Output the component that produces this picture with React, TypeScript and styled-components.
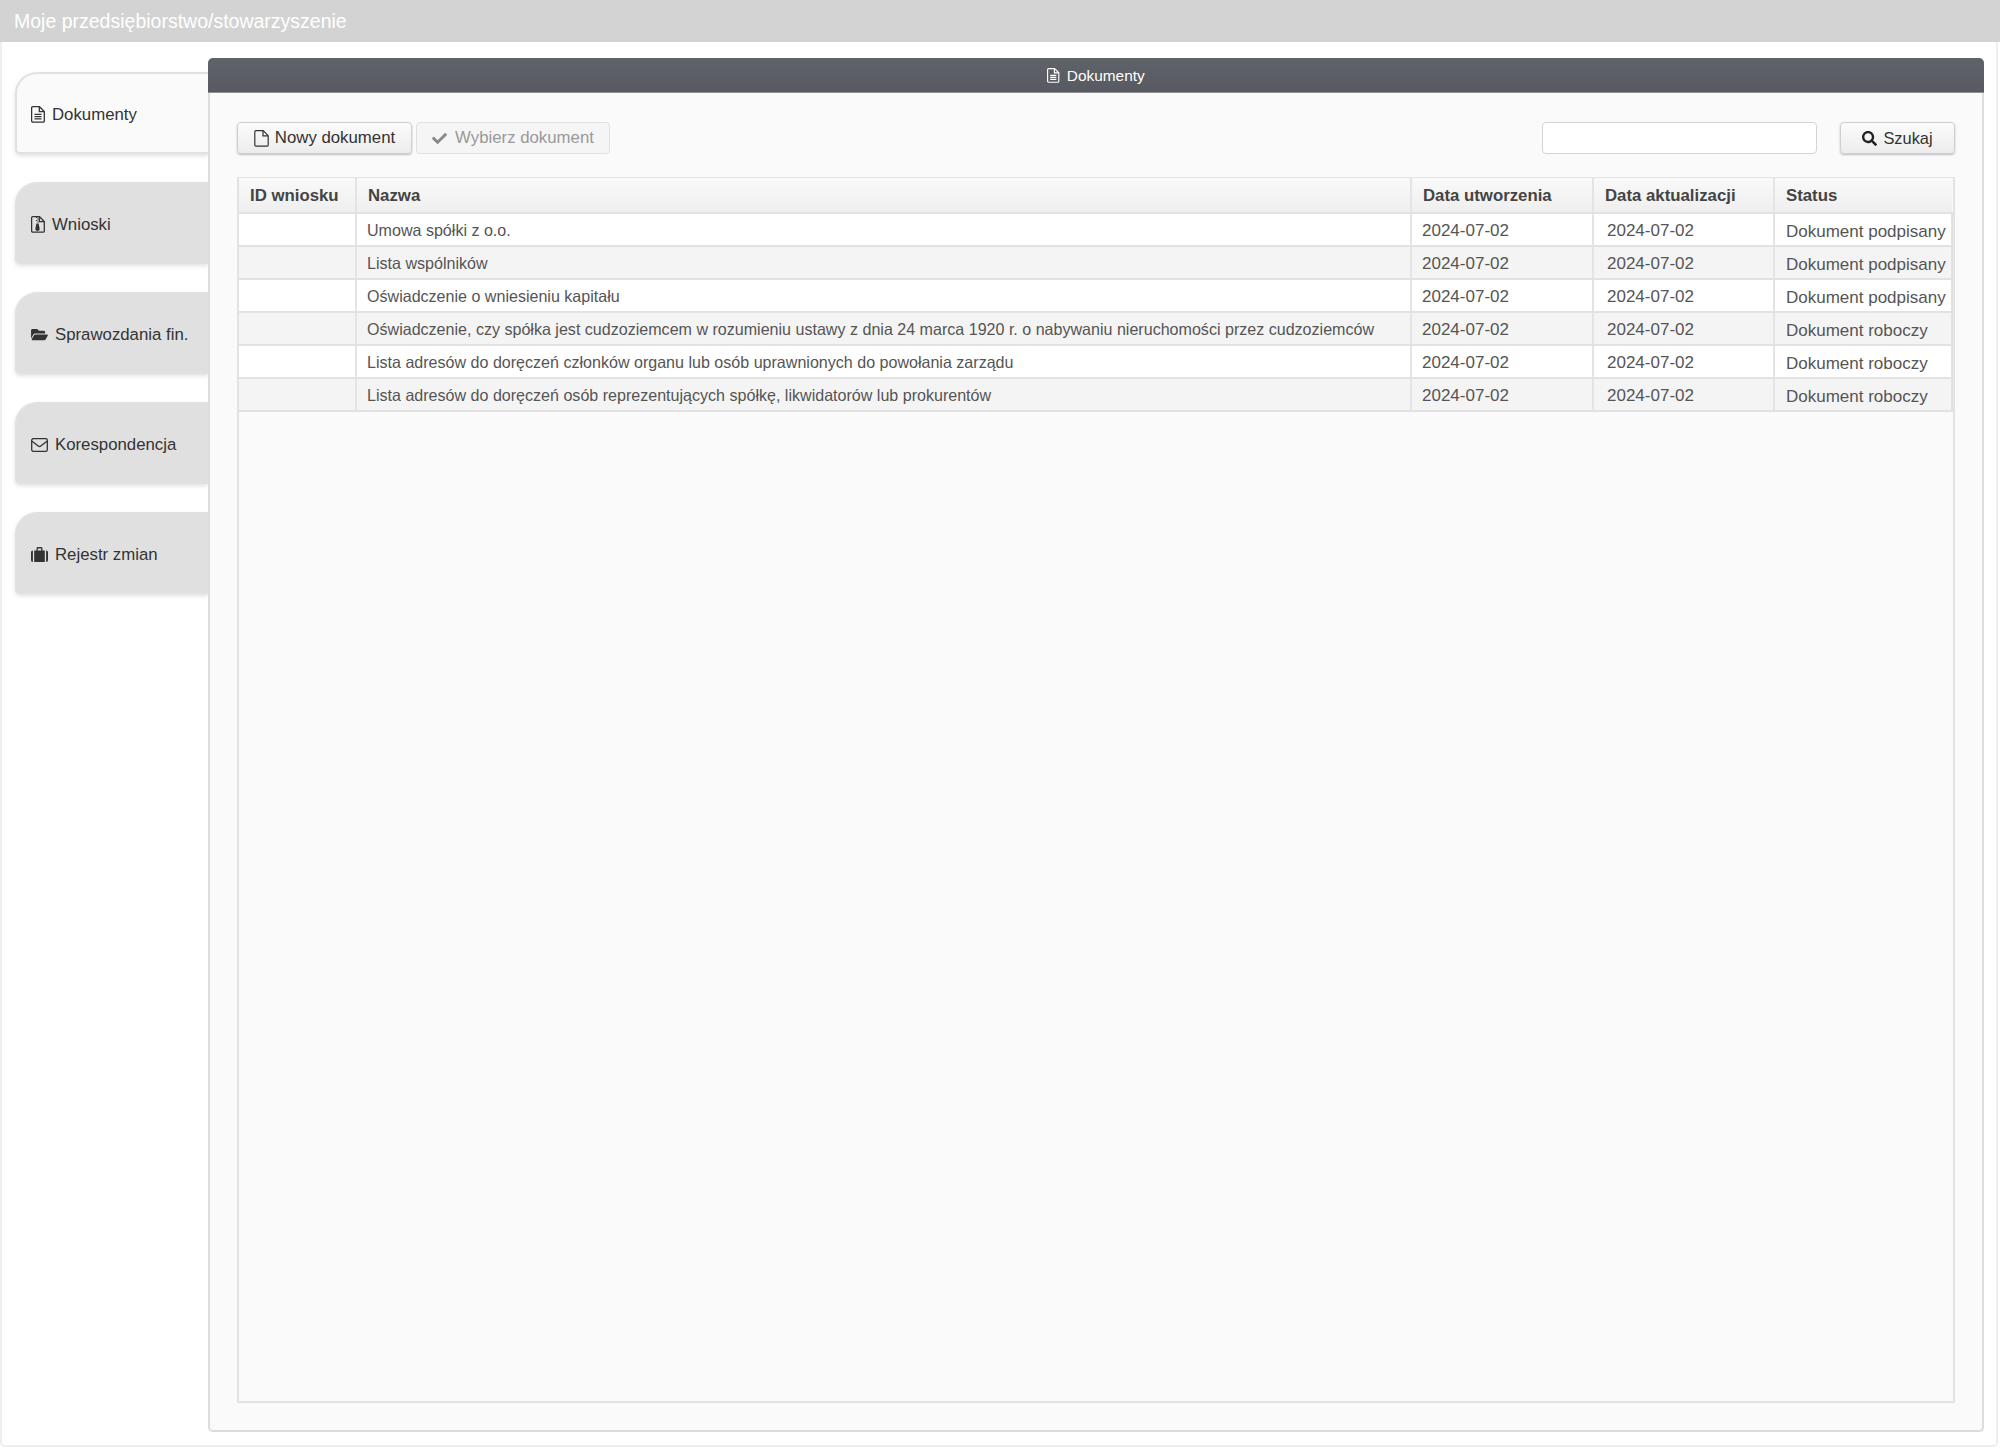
import React from 'react';
import styled, { createGlobalStyle } from 'styled-components';
import { FaFolderOpen, FaCheck, FaSearch } from 'react-icons/fa';

const Global = createGlobalStyle`
  html, body { margin: 0; padding: 0; background: #fff; }
  body { font-family: "Liberation Sans", Arial, sans-serif; }
  * { box-sizing: border-box; }
`;

const Page = styled.div`
  width: 2000px;
  height: 1450px;
  display: flex;
  flex-direction: column;
  overflow: hidden;
`;
const TopBar = styled.header`
  flex: none;
  height: 42px;
  background: #d3d3d3;
  color: #fff;
  font-size: 19.5px;
  line-height: 42px;
  padding-left: 14px;
`;
const Frame = styled.div`
  flex: none;
  width: 1998px;
  height: 1405px;
  border: 2px solid #eeeeee;
  border-top: 0;
  border-radius: 0 0 5px 5px;
  display: flex;
  padding: 16px 12px 13px 13px;
`;
const Tabs = styled.nav`
  flex: none;
  width: 193px;
  padding-top: 14px;
  display: flex;
  flex-direction: column;
  gap: 28px;
`;
const Tab = styled.a<{ $active?: boolean }>`
  height: 82px;
  display: flex;
  align-items: center;
  gap: 7px;
  padding: 3px 0 0 14px;
  border: 2px solid #e1e1e1;
  border-right: 0;
  border-radius: 22px 0 0 5px;
  background: ${p => (p.$active ? '#fafafa' : '#e0e0e0')};
  box-shadow: 0 2px 4px rgba(0, 0, 0, 0.12);
  color: #333;
  font-size: 16.8px;
  svg { flex: none; color: #333; }
`;
const FolderIcon = styled(FaFolderOpen)`
  width: 17px;
  height: 15px;
`;
const Panel = styled.section`
  flex: 1;
  display: flex;
  flex-direction: column;
  border: 2px solid #dcdcdc;
  border-top: 0;
  border-radius: 5px;
  background: #fafafa;
`;
const PanelHead = styled.div`
  flex: none;
  height: 35px;
  margin: 0 -2px;
  padding-top: 1px;
  border-radius: 5px 5px 0 0;
  background: linear-gradient(#5f6269, #575a60);
  border-bottom: 1px solid #8d8f93;
  color: #fff;
  font-size: 15.4px;
  display: flex;
  align-items: center;
  justify-content: center;
  gap: 7px;
`;
const PanelBody = styled.div`
  flex: 1;
  display: flex;
  flex-direction: column;
  padding: 29px 27px 27px 27px;
  min-height: 0;
`;
const Toolbar = styled.div`
  flex: none;
  height: 32px;
  display: flex;
  align-items: stretch;
  gap: 4px;
  margin-bottom: 23px;
`;
const Button = styled.button<{ $disabled?: boolean }>`
  height: 32px;
  display: inline-flex;
  align-items: center;
  justify-content: center;
  gap: 6px;
  padding: 0;
  border: 1px solid ${p => (p.$disabled ? '#e0e0e0' : '#cfcfcf')};
  border-radius: 4px;
  background: ${p => (p.$disabled ? '#f5f5f5' : 'linear-gradient(#fbfbfb, #ececec)')};
  box-shadow: ${p => (p.$disabled ? 'none' : '0 1px 2px rgba(0, 0, 0, 0.25)')};
  color: ${p => (p.$disabled ? '#999' : '#333')};
  font-family: inherit;
  font-size: 16.8px;
`;
const NewButton = styled(Button)`
  width: 175px;
`;
const PickButton = styled(Button)`
  width: 194px;
  gap: 8px;
  svg { font-size: 15px; color: #888; }
`;
const SearchButton = styled(Button)`
  width: 115px;
  font-size: 16.4px;
  svg { font-size: 15px; color: #222; }
`;
const SearchInput = styled.input`
  width: 275px;
  height: 32px;
  margin-left: auto;
  margin-right: 19px;
  border: 1px solid #d4d4d4;
  border-radius: 4px;
  background: #fff;
`;
const GridFrame = styled.div`
  flex: 1;
  min-height: 0;
  border: 2px solid #e2e2e2;
  border-top-width: 1px;
`;
const Table = styled.table`
  width: 100%;
  table-layout: fixed;
  border-collapse: collapse;
`;
const HeadCell = styled.th`
  height: 35px;
  padding: 2px 0 0 11px;
  background: linear-gradient(#f9f9f9, #efefef);
  border-right: 2px solid #e4e4e4;
  border-bottom: 2px solid #e2e2e2;
  color: #444;
  font-size: 16.8px;
  font-weight: 700;
  text-align: left;
  white-space: nowrap;
  &:last-child { border-right: 0; }
`;
const Row = styled.tr<{ $odd: boolean }>`
  background: ${p => (p.$odd ? '#f4f4f4' : '#fff')};
`;
const Cell = styled.td`
  height: 33px;
  padding: 0;
  border-right: 2px solid #e4e4e4;
  border-bottom: 2px solid #e2e2e2;
  color: #555;
  white-space: nowrap;
  overflow: hidden;
  &:last-child { border-right: 2px solid #e2e2e2; }
`;
const NameCell = styled(Cell)`
  padding: 2px 0 0 10px;
  font-size: 16.07px;
`;
const DateCell = styled(Cell)<{ $pad: number }>`
  padding: 2px 0 0 ${p => p.$pad}px;
  font-size: 17px;
`;
const StatusCell = styled(Cell)`
  padding: 4px 0 0 11px;
  font-size: 17px;
`;

const FileText = ({ w = 14, h = 17 }: { w?: number; h?: number }) => (
  <svg width={w} height={h} viewBox="0 0 14 17" fill="none" stroke="currentColor" strokeWidth="1.3">
    <path d="M1.8.7h6.7l4.8 4.8v9.4a1.2 1.2 0 0 1-1.2 1.2H1.8a1.2 1.2 0 0 1-1.2-1.2V1.9A1.2 1.2 0 0 1 1.8.7z" />
    <path d="M8.3 1v4.6h4.8M3.5 8.3h7M3.5 10.6h7M3.5 12.9h7" />
  </svg>
);
const FileArchive = () => (
  <svg width="14" height="17" viewBox="0 0 14 17" fill="none" stroke="currentColor" strokeWidth="1.3">
    <path d="M1.8.7h6.7l4.8 4.8v9.4a1.2 1.2 0 0 1-1.2 1.2H1.8a1.2 1.2 0 0 1-1.2-1.2V1.9A1.2 1.2 0 0 1 1.8.7z" />
    <path d="M8.3 1v4.6h4.8" />
    <path d="M5 1.5h1.3M6.3 3h1.3M5 4.5h1.3M6.3 6h1.3" strokeWidth="1" />
    <path d="M5.4 7.5h2.2l.9 4.4a2.2 2.2 0 1 1-4 0z" fill="currentColor" stroke="none" />
  </svg>
);
const FilePlain = () => (
  <svg width="15" height="17" viewBox="0 0 15 17" fill="none" stroke="currentColor" strokeWidth="1.2">
    <path d="M2 .7h7.2l5 5v9.2a1.3 1.3 0 0 1-1.3 1.3H2A1.3 1.3 0 0 1 .8 14.9V2A1.3 1.3 0 0 1 2 .7z" />
    <path d="M9 1v4.9h5" />
  </svg>
);
const Envelope = () => (
  <svg width="17" height="14" viewBox="0 0 17 14" fill="none" stroke="currentColor" strokeWidth="1.3">
    <rect x=".7" y=".7" width="15.6" height="12.6" rx="1.6" />
    <path d="M1 3.2l6.3 4.9a1.9 1.9 0 0 0 2.4 0L16 3.2" />
  </svg>
);
const Briefcase = () => (
  <svg width="17" height="15" viewBox="0 0 17 15" fill="currentColor">
    <path d="M0 5.2A1.7 1.7 0 0 1 1.7 3.5h.2V15h-.2A1.7 1.7 0 0 1 0 13.3zM15.1 3.5h.2A1.7 1.7 0 0 1 17 5.2v8.1a1.7 1.7 0 0 1-1.7 1.7h-.2z" />
    <path fillRule="evenodd" d="M3.2 3.5h2.3V1.4A1.4 1.4 0 0 1 6.9 0h3.2a1.4 1.4 0 0 1 1.4 1.4v2.1h2.3V15H3.2zM6.8 3.5h3.4V1.4H6.8z" />
  </svg>
);

const rows = [
  ['Umowa spółki z o.o.', 'Dokument podpisany'],
  ['Lista wspólników', 'Dokument podpisany'],
  ['Oświadczenie o wniesieniu kapitału', 'Dokument podpisany'],
  ['Oświadczenie, czy spółka jest cudzoziemcem w rozumieniu ustawy z dnia 24 marca 1920 r. o nabywaniu nieruchomości przez cudzoziemców', 'Dokument roboczy'],
  ['Lista adresów do doręczeń członków organu lub osób uprawnionych do powołania zarządu', 'Dokument roboczy'],
  ['Lista adresów do doręczeń osób reprezentujących spółkę, likwidatorów lub prokurentów', 'Dokument roboczy'],
];

const tabs = [
  { label: 'Dokumenty', icon: <FileText />, active: true },
  { label: 'Wnioski', icon: <FileArchive /> },
  { label: 'Sprawozdania fin.', icon: <FolderIcon /> },
  { label: 'Korespondencja', icon: <Envelope /> },
  { label: 'Rejestr zmian', icon: <Briefcase /> },
];

export default function App() {
  return (
    <Page>
      <Global />
      <TopBar>Moje przedsiębiorstwo/stowarzyszenie</TopBar>
      <Frame>
        <Tabs>
          {tabs.map(t => (
            <Tab key={t.label} $active={t.active}>
              {t.icon}
              {t.label}
            </Tab>
          ))}
        </Tabs>
        <Panel>
          <PanelHead>
            <FileText w={12.5} h={15} />
            Dokumenty
          </PanelHead>
          <PanelBody>
            <Toolbar>
              <NewButton><FilePlain />Nowy dokument</NewButton>
              <PickButton $disabled><FaCheck />Wybierz dokument</PickButton>
              <SearchInput />
              <SearchButton><FaSearch />Szukaj</SearchButton>
            </Toolbar>
            <GridFrame>
              <Table>
                <colgroup>
                  <col style={{ width: 117 }} />
                  <col />
                  <col style={{ width: 182 }} />
                  <col style={{ width: 181 }} />
                  <col style={{ width: 178 }} />
                </colgroup>
                <thead>
                  <tr>
                    <HeadCell>ID wniosku</HeadCell>
                    <HeadCell>Nazwa</HeadCell>
                    <HeadCell>Data utworzenia</HeadCell>
                    <HeadCell>Data aktualizacji</HeadCell>
                    <HeadCell>Status</HeadCell>
                  </tr>
                </thead>
                <tbody>
                  {rows.map(([name, status], i) => (
                    <Row key={name} $odd={i % 2 === 1}>
                      <Cell />
                      <NameCell>{name}</NameCell>
                      <DateCell $pad={10}>2024-07-02</DateCell>
                      <DateCell $pad={13}>2024-07-02</DateCell>
                      <StatusCell>{status}</StatusCell>
                    </Row>
                  ))}
                </tbody>
              </Table>
            </GridFrame>
          </PanelBody>
        </Panel>
      </Frame>
    </Page>
  );
}
